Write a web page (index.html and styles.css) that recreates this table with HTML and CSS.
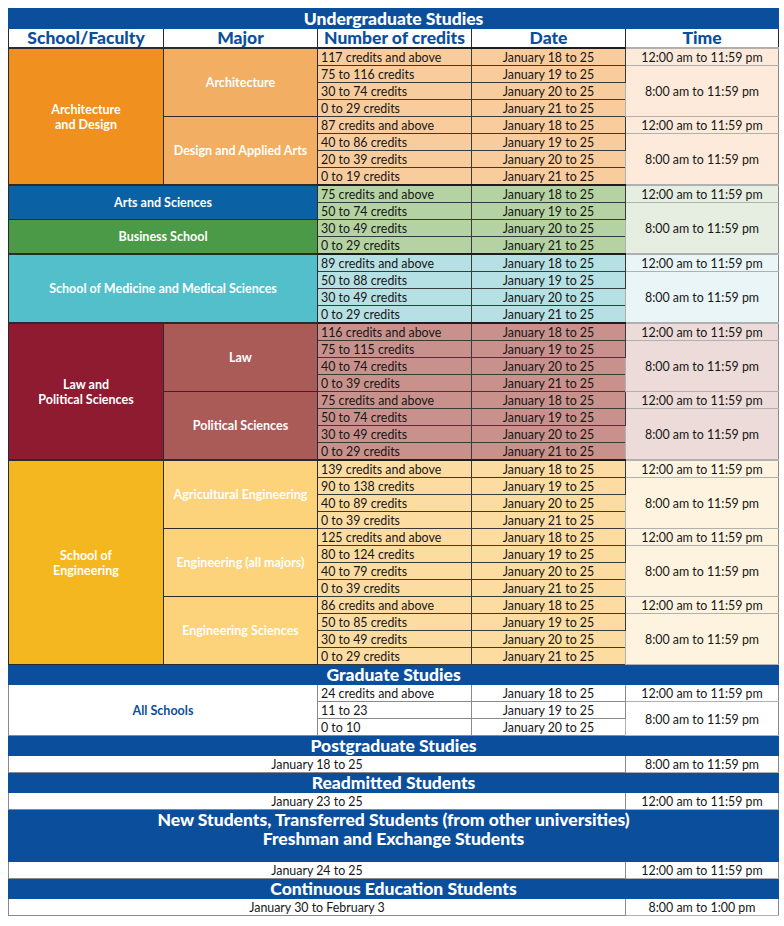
FILE: index.html
```html
<!DOCTYPE html>
<html lang="en">
<head>
<meta charset="utf-8">
<title>Registration Schedule</title>
<link rel="stylesheet" href="styles.css">
</head>
<body>
<table class="sched">
  <colgroup><col class="c1"><col class="c2"><col class="c3"><col class="c4"><col class="c5"></colgroup>
  <tbody>
    <tr class="bar"><th colspan="5">Undergraduate Studies</th></tr>
    <tr class="colhead"><th>School/Faculty</th><th>Major</th><th>Number of credits</th><th>Date</th><th>Time</th></tr>

    <!-- Architecture -->
    <tr class="r arch gtop"><td rowspan="8" class="school">Architecture<br>and Design</td><td rowspan="4" class="major">Architecture</td><td class="cr">117 credits and above</td><td class="dt">January 18 to 25</td><td class="tm">12:00 am to 11:59 pm</td></tr>
    <tr class="r arch"><td class="cr">75 to 116 credits</td><td class="dt">January 19 to 25</td><td class="tm" rowspan="3">8:00 am to 11:59 pm</td></tr>
    <tr class="r arch"><td class="cr">30 to 74 credits</td><td class="dt">January 20 to 25</td></tr>
    <tr class="r arch"><td class="cr">0 to 29 credits</td><td class="dt">January 21 to 25</td></tr>
    <tr class="r arch"><td rowspan="4" class="major">Design and Applied Arts</td><td class="cr">87 credits and above</td><td class="dt">January 18 to 25</td><td class="tm">12:00 am to 11:59 pm</td></tr>
    <tr class="r arch"><td class="cr">40 to 86 credits</td><td class="dt">January 19 to 25</td><td class="tm" rowspan="3">8:00 am to 11:59 pm</td></tr>
    <tr class="r arch"><td class="cr">20 to 39 credits</td><td class="dt">January 20 to 25</td></tr>
    <tr class="r arch"><td class="cr">0 to 19 credits</td><td class="dt">January 21 to 25</td></tr>

    <!-- Arts / Business -->
    <tr class="r green gtop"><td rowspan="2" colspan="2" class="school arts">Arts and Sciences</td><td class="cr">75 credits and above</td><td class="dt">January 18 to 25</td><td class="tm">12:00 am to 11:59 pm</td></tr>
    <tr class="r green"><td class="cr">50 to 74 credits</td><td class="dt">January 19 to 25</td><td class="tm" rowspan="3">8:00 am to 11:59 pm</td></tr>
    <tr class="r green"><td rowspan="2" colspan="2" class="school biz">Business School</td><td class="cr">30 to 49 credits</td><td class="dt">January 20 to 25</td></tr>
    <tr class="r green"><td class="cr">0 to 29 credits</td><td class="dt">January 21 to 25</td></tr>

    <!-- Medicine -->
    <tr class="r med gtop"><td rowspan="4" colspan="2" class="school">School of Medicine and Medical Sciences</td><td class="cr">89 credits and above</td><td class="dt">January 18 to 25</td><td class="tm">12:00 am to 11:59 pm</td></tr>
    <tr class="r med"><td class="cr">50 to 88 credits</td><td class="dt">January 19 to 25</td><td class="tm" rowspan="3">8:00 am to 11:59 pm</td></tr>
    <tr class="r med"><td class="cr">30 to 49 credits</td><td class="dt">January 20 to 25</td></tr>
    <tr class="r med"><td class="cr">0 to 29 credits</td><td class="dt">January 21 to 25</td></tr>

    <!-- Law -->
    <tr class="r law gtop"><td rowspan="8" class="school">Law and<br>Political Sciences</td><td rowspan="4" class="major">Law</td><td class="cr">116 credits and above</td><td class="dt">January 18 to 25</td><td class="tm">12:00 am to 11:59 pm</td></tr>
    <tr class="r law"><td class="cr">75 to 115 credits</td><td class="dt">January 19 to 25</td><td class="tm" rowspan="3">8:00 am to 11:59 pm</td></tr>
    <tr class="r law"><td class="cr">40 to 74 credits</td><td class="dt">January 20 to 25</td></tr>
    <tr class="r law"><td class="cr">0 to 39 credits</td><td class="dt">January 21 to 25</td></tr>
    <tr class="r law"><td rowspan="4" class="major">Political Sciences</td><td class="cr">75 credits and above</td><td class="dt">January 18 to 25</td><td class="tm">12:00 am to 11:59 pm</td></tr>
    <tr class="r law"><td class="cr">50 to 74 credits</td><td class="dt">January 19 to 25</td><td class="tm" rowspan="3">8:00 am to 11:59 pm</td></tr>
    <tr class="r law"><td class="cr">30 to 49 credits</td><td class="dt">January 20 to 25</td></tr>
    <tr class="r law"><td class="cr">0 to 29 credits</td><td class="dt">January 21 to 25</td></tr>

    <!-- Engineering -->
    <tr class="r eng gtop"><td rowspan="12" class="school">School of<br>Engineering</td><td rowspan="4" class="major">Agricultural Engineering</td><td class="cr">139 credits and above</td><td class="dt">January 18 to 25</td><td class="tm">12:00 am to 11:59 pm</td></tr>
    <tr class="r eng"><td class="cr">90 to 138 credits</td><td class="dt">January 19 to 25</td><td class="tm" rowspan="3">8:00 am to 11:59 pm</td></tr>
    <tr class="r eng"><td class="cr">40 to 89 credits</td><td class="dt">January 20 to 25</td></tr>
    <tr class="r eng"><td class="cr">0 to 39 credits</td><td class="dt">January 21 to 25</td></tr>
    <tr class="r eng"><td rowspan="4" class="major">Engineering (all majors)</td><td class="cr">125 credits and above</td><td class="dt">January 18 to 25</td><td class="tm">12:00 am to 11:59 pm</td></tr>
    <tr class="r eng"><td class="cr">80 to 124 credits</td><td class="dt">January 19 to 25</td><td class="tm" rowspan="3">8:00 am to 11:59 pm</td></tr>
    <tr class="r eng"><td class="cr">40 to 79 credits</td><td class="dt">January 20 to 25</td></tr>
    <tr class="r eng"><td class="cr">0 to 39 credits</td><td class="dt">January 21 to 25</td></tr>
    <tr class="r eng"><td rowspan="4" class="major">Engineering Sciences</td><td class="cr">86 credits and above</td><td class="dt">January 18 to 25</td><td class="tm">12:00 am to 11:59 pm</td></tr>
    <tr class="r eng"><td class="cr">50 to 85 credits</td><td class="dt">January 19 to 25</td><td class="tm" rowspan="3">8:00 am to 11:59 pm</td></tr>
    <tr class="r eng"><td class="cr">30 to 49 credits</td><td class="dt">January 20 to 25</td></tr>
    <tr class="r eng"><td class="cr">0 to 29 credits</td><td class="dt">January 21 to 25</td></tr>

    <!-- Graduate -->
    <tr class="bar"><th colspan="5">Graduate Studies</th></tr>
    <tr class="r plain"><td rowspan="3" colspan="2" class="school allsch">All Schools</td><td class="cr">24 credits and above</td><td class="dt">January 18 to 25</td><td class="tm">12:00 am to 11:59 pm</td></tr>
    <tr class="r plain"><td class="cr">11 to 23</td><td class="dt">January 19 to 25</td><td class="tm" rowspan="2">8:00 am to 11:59 pm</td></tr>
    <tr class="r plain"><td class="cr">0 to 10</td><td class="dt">January 20 to 25</td></tr>

    <tr class="bar"><th colspan="5">Postgraduate Studies</th></tr>
    <tr class="r plain"><td colspan="4" class="dt">January 18 to 25</td><td class="tm">8:00 am to 11:59 pm</td></tr>

    <tr class="bar"><th colspan="5">Readmitted Students</th></tr>
    <tr class="r plain"><td colspan="4" class="dt">January 23 to 25</td><td class="tm">12:00 am to 11:59 pm</td></tr>

    <tr class="bar tall"><th colspan="5">New Students, Transferred Students (from other universities)<br>Freshman and Exchange Students</th></tr>
    <tr class="r plain"><td colspan="4" class="dt">January 24 to 25</td><td class="tm">12:00 am to 11:59 pm</td></tr>

    <tr class="bar"><th colspan="5">Continuous Education Students</th></tr>
    <tr class="r plain last"><td colspan="4" class="dt">January 30 to February 3</td><td class="tm">8:00 am to 1:00 pm</td></tr>
  </tbody>
</table>
</body>
</html>
```

FILE: styles.css
```css
html, body {
  margin: 0;
  padding: 0;
  background: #ffffff;
}
body {
  padding: 8px 0 0 8px;
  font-family: "Lato", "Open Sans", sans-serif;
  color: #161616;
}
.sched {
  border-collapse: collapse;
  table-layout: fixed;
  width: 770px;
  border: 1px solid #8a8a8a;
}
.c1 { width: 155px; }
.c2 { width: 154px; }
.c3 { width: 154px; }
.c4 { width: 154px; }
.c5 { width: 153px; }

.sched td, .sched th {
  padding: 0;
  overflow: hidden;
  white-space: nowrap;
}

/* Blue section bars */
.bar th {
  background: #0b4f9c;
  color: #ffffff;
  font-weight: 900;
  font-size: 17.5px;
  height: 19px;
  line-height: 19px;
  text-align: center;
  border: 1px solid #0b4f9c;
}
.bar.tall th {
  height: 51px;
  line-height: 19px;
  vertical-align: top;
  padding-top: 0;
}

/* Column header row */
.colhead th {
  background: #ffffff;
  color: #0b4f9c;
  font-weight: 900;
  font-size: 17.5px;
  height: 18px;
  line-height: 18px;
  text-align: center;
  border: 1px solid #2b2b2b;
}

/* Data rows */
.r td {
  height: 15px;
  padding-top: 1px;
  font-size: 12.4px;
  line-height: 15px;
  border: 1px solid #3a3a3a;
}
.r .cr { text-align: left; padding-left: 3px; }
.r .dt { text-align: center; }
.r .tm { text-align: center; border-color: #b0b0b0; border-right-color: #8a8a8a; }
.gtop td { border-top: 2px solid #1e1e1e; height: 14px; }

.r .school, .r .major {
  color: #ffffff;
  font-weight: 700;
  font-size: 12.5px;
  line-height: 15px;
  padding-top: 0;
  text-align: center;
  border-color: #2b2b2b;
}

/* Architecture & Design */
.arch .school { background: #ef901f; }
.arch .major { background: #f2ae62; }
.arch .cr, .arch .dt { background: #f8cc9d; }
.arch .tm { background: #fdeadb; }

/* Arts / Business */
.r .arts { background: #0a62a4; }
.r .biz { background: #4b9a47; }
.green .cr, .green .dt { background: #b5d3a2; }
.green .tm { background: #e6ede1; }

/* Medicine */
.med .school { background: #53bfcb; }
.med .cr, .med .dt { background: #b5e0e4; }
.med .tm { background: #e9f5f6; }

/* Law */
.law .school { background: #8f1b30; }
.law .major { background: #aa5b58; }
.law .cr, .law .dt { background: #c9918c; }
.law .tm { background: #ecdbd8; }

/* Engineering */
.eng .school { background: #f5b71f; }
.eng .major { background: #fcd27a; }
.eng .cr, .eng .dt { background: #fcdca1; }
.eng .tm { background: #fef3df; }

/* Plain white rows */
.plain td { background: #ffffff; border-color: #8a8a8a; }
.r .school.allsch { color: #0b4f9c; background: #ffffff; border-color: #8a8a8a; }
```
